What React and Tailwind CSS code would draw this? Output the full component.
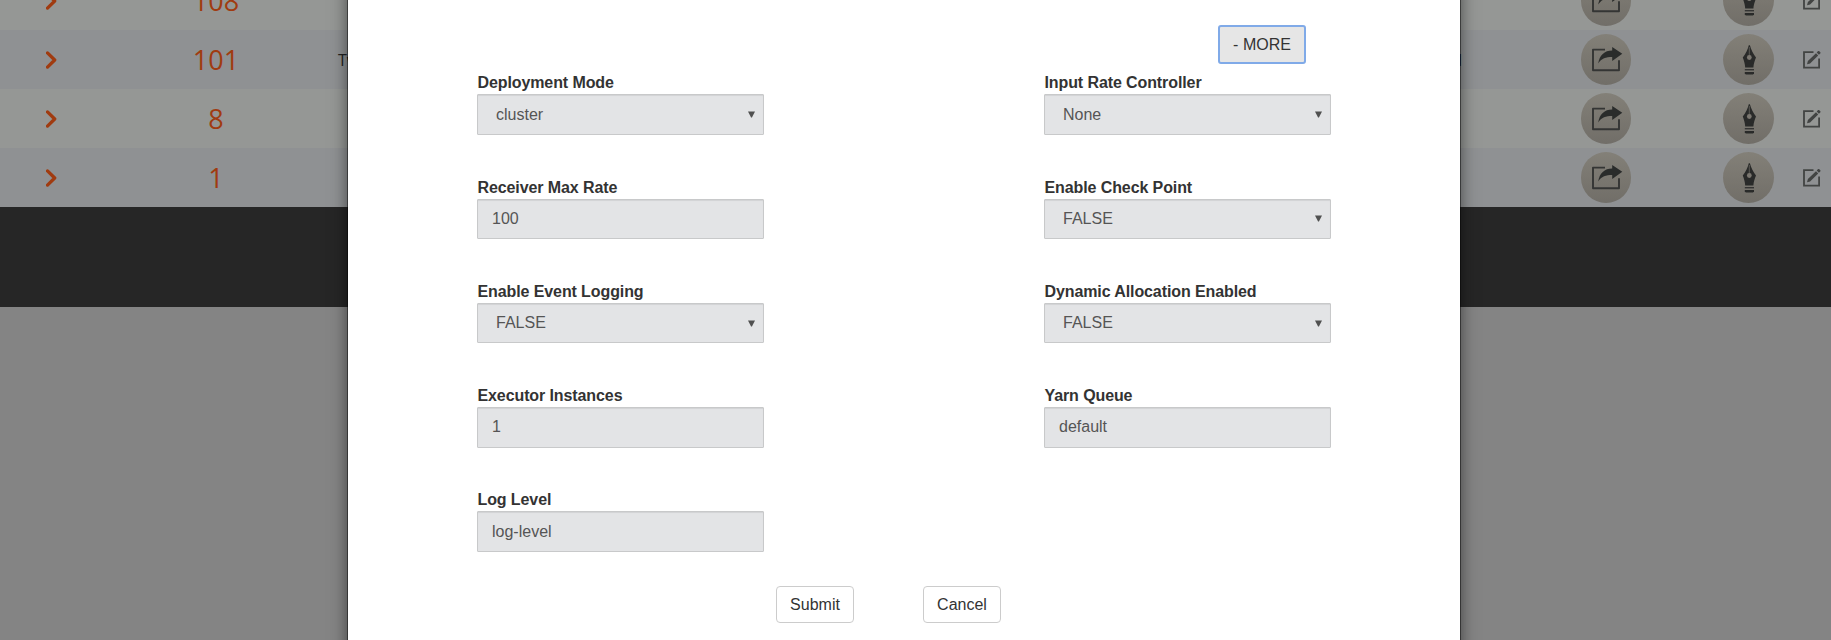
const rows = [
  { count: '108' },
  { count: '101', name: 'Twitter', state: 'Started' },
  { count: '8' },
  { count: '1' },
];

const fields = [
  { label: 'Deployment Mode', value: 'cluster', select: true },
  { label: 'Input Rate Controller', value: 'None', select: true },
  { label: 'Receiver Max Rate', value: '100' },
  { label: 'Enable Check Point', value: 'FALSE', select: true },
  { label: 'Enable Event Logging', value: 'FALSE', select: true },
  { label: 'Dynamic Allocation Enabled', value: 'FALSE', select: true },
  { label: 'Executor Instances', value: '1' },
  { label: 'Yarn Queue', value: 'default' },
  { label: 'Log Level', value: 'log-level' },
];

function Chevron() {
  return (
    <svg className="h-[18px] w-3 shrink-0" viewBox="0 0 12 18" fill="none" stroke="#a03b10" strokeWidth="3.3">
      <path d="M1.5 1.9 8.7 9 1.5 16.1" strokeLinejoin="round" strokeLinecap="round" />
    </svg>
  );
}

function ShareIcon() {
  return (
    <svg className="h-[51px] w-[50px]" viewBox="0 0 50 51" fill="none">
      <path d="M24 15.6H12V36.2H38V26.2" stroke="#343534" strokeWidth="1.9" strokeLinejoin="round" />
      <path d="M41.3 19.8 31.2 13v3.4C23.5 16.4 18.4 21 17.2 29.6 20.4 24.4 25 23 31.2 23v3.9z" fill="#2a2c2b" />
    </svg>
  );
}

function PenIcon() {
  return (
    <svg className="h-[51px] w-[51px]" viewBox="0 0 51 51">
      <path d="M25.8 11.2h1.1C28 15.8 30.3 19.8 33 23.6 31.8 26.6 30.6 29.8 30.4 33.6H22.2C22 29.8 20.9 26.6 19.8 23.6 22.5 19.8 24.8 15.8 25.8 11.2z" fill="#292a29" />
      <path d="M26.3 13v9" stroke="#6f6c66" strokeWidth="0.7" />
      <circle cx="26.3" cy="23.5" r="2.4" fill="#7b7770" />
      <path d="M21.8 35.7h9.2" stroke="#343433" strokeWidth="1.4" />
      <path d="M21.8 38h9.2v1.5l-1 1h-7.2l-1-1z" fill="#292a29" />
    </svg>
  );
}

function EditIcon() {
  return (
    <svg className="h-[18px] w-[18px] shrink-0" viewBox="0 0 18 18" fill="none">
      <path d="M10.5 1.1H1V16.7H16.1V7.6" stroke="#424443" strokeWidth="1.8" />
      <path d="M4 13.3 4.9 10.1 13 2.2 15.2 4.4 7.1 12.4zM13.7 1.5 15.1.1Q15.7-.3 16.3.2L17.3 1.2Q17.8 1.8 17.3 2.4L15.9 3.7z" fill="#424443" />
    </svg>
  );
}

function Row({ count, name, state, striped }) {
  return (
    <div className={`flex h-[59px] shrink-0 items-center overflow-hidden ${striped ? 'bg-[#8f9193]' : 'bg-[#959795]'}`}>
      <div className="w-[102px] pl-[46px]"><Chevron /></div>
      <div className="w-[228px] text-center font-['Open_Sans',sans-serif] text-[27px] leading-9 text-[#a03b10]">{count}</div>
      <div className="w-[600px] pl-2 font-['Open_Sans',sans-serif] text-base text-[#222]">{name}</div>
      <div className="w-[532px] text-right font-['Open_Sans',sans-serif] text-base text-[#222]">{state}</div>
      <div className="ml-[119px] h-[51px] w-[50px] shrink-0 rounded-full bg-linear-to-b from-[#838078] to-[#716e68]"><ShareIcon /></div>
      <div className="ml-[92px] h-[51px] w-[51px] shrink-0 rounded-full bg-linear-to-b from-[#838078] to-[#716e68]"><PenIcon /></div>
      <div className="ml-[29px] shrink-0"><EditIcon /></div>
    </div>
  );
}

function Field({ label, value, select }) {
  return (
    <div className="h-[104.25px]">
      <div className="h-[22.5px] pt-[0.4px] pl-[0.5px] text-base leading-[22.5px] font-bold tracking-[-0.1px] text-[#333]">{label}</div>
      <div className={`flex h-[40.5px] items-center justify-between rounded-[1px] border border-[#c8c9ca] bg-[#e3e4e6] text-base text-[#555] shadow-[inset_0_1px_1px_rgba(0,0,0,0.075)] ${select ? 'pr-2 pl-[18px]' : 'px-3.5'}`}>
        <span>{value}</span>
        {select && (
          <svg className="h-[7px] w-[7px]" viewBox="0 0 8 7"><path d="M0 0H8L4.5 7H3.5z" fill="#505050" /></svg>
        )}
      </div>
    </div>
  );
}

export default function App() {
  return (
    <div className="relative h-[640px] w-[1831px] overflow-hidden bg-[#848484] font-['Liberation_Sans',Arial,sans-serif]">
      <div className="-mt-[29px] flex flex-col">
        {rows.map((row, i) => <Row key={row.count} {...row} striped={i % 2 === 1} />)}
        <div className="h-[100px] bg-[#262626]" />
      </div>

      <div className="absolute -top-5 left-[347px] h-[700px] w-[1114px] border border-black/45 bg-white bg-clip-padding px-[129px] pt-[44px] shadow-[0_5px_15px_rgba(0,0,0,0.5)]">
        <div className="flex h-[46.9px] justify-end pr-[25px]">
          <button className="h-[39px] w-[88px] rounded-[3px] border-2 border-[#80aae8] bg-[#e6e6e6] text-base text-[#333]">- MORE</button>
        </div>
        <div className="grid grid-cols-[287px_287px] gap-x-[280px]">
          {fields.map((field) => <Field key={field.label} {...field} />)}
        </div>
        <div className="flex gap-[69px] pl-[299px]">
          <button className="-mt-[6.9px] h-[37px] w-[78px] rounded border border-[#ccc] bg-white text-base text-[#333]">Submit</button>
          <button className="-mt-[6.9px] h-[37px] w-[78px] rounded border border-[#ccc] bg-white text-base text-[#333]">Cancel</button>
        </div>
      </div>
    </div>
  );
}
